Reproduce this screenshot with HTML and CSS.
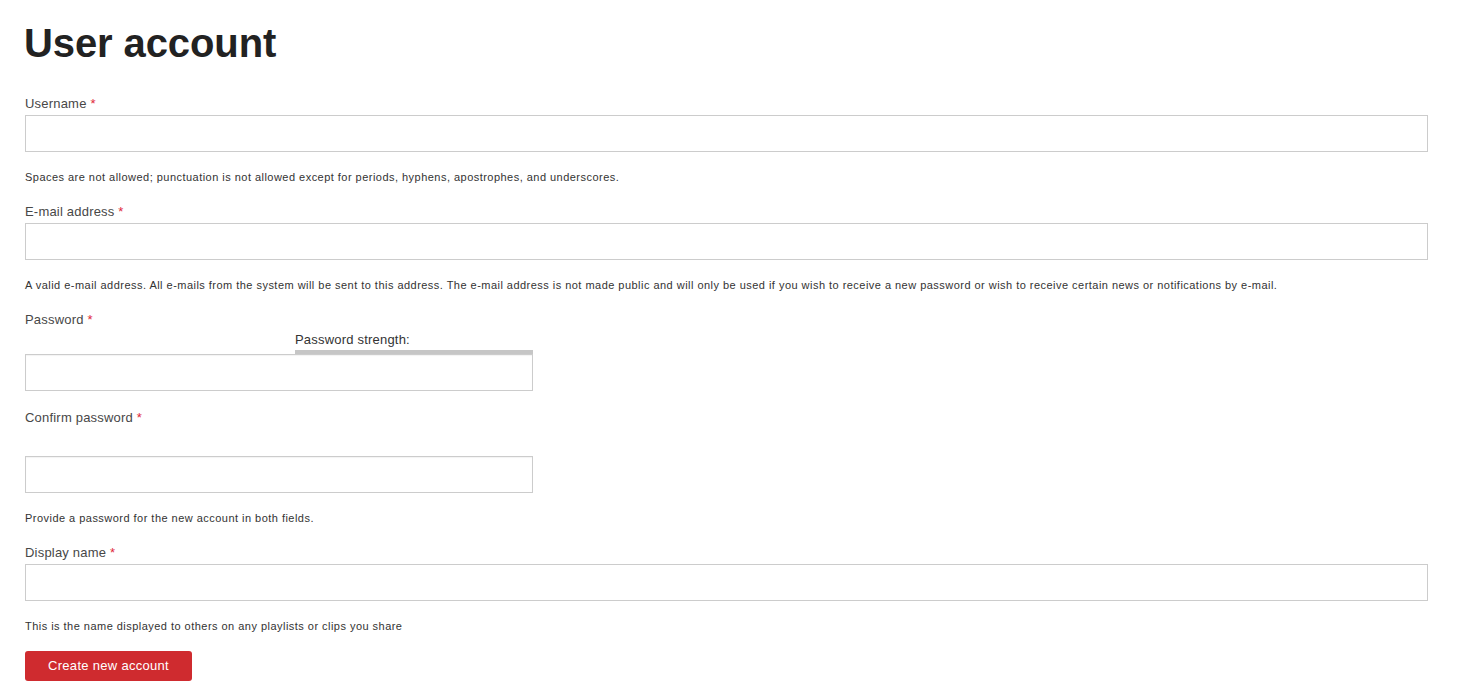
FILE: index.html
```html
<!DOCTYPE html>
<html lang="en">
<head>
<meta charset="utf-8">
<title>User account</title>
<link rel="stylesheet" href="styles.css">
</head>
<body>
<main class="page">
  <h1 class="page-title">User account</h1>
  <form class="account-form">
    <div class="field">
      <label class="field-label" for="name">Username <span class="req">*</span></label>
      <input class="text-input" id="name" type="text">
      <div class="description">Spaces are not allowed; punctuation is not allowed except for periods, hyphens, apostrophes, and underscores.</div>
    </div>
    <div class="field">
      <label class="field-label" for="mail">E-mail address <span class="req">*</span></label>
      <input class="text-input" id="mail" type="text">
      <div class="description">A valid e-mail address. All e-mails from the system will be sent to this address. The e-mail address is not made public and will only be used if you wish to receive a new password or wish to receive certain news or notifications by e-mail.</div>
    </div>
    <div class="field password-field">
      <label class="field-label" for="pass1">Password <span class="req">*</span></label>
      <div class="strength">
        <div class="strength-title">Password strength:</div>
        <div class="strength-bar"></div>
      </div>
      <input class="text-input pass-input" id="pass1" type="password">
    </div>
    <div class="field password-field">
      <label class="field-label" for="pass2">Confirm password <span class="req">*</span></label>
      <div class="confirm-message"></div>
      <input class="text-input pass-input" id="pass2" type="password">
      <div class="description">Provide a password for the new account in both fields.</div>
    </div>
    <div class="field">
      <label class="field-label" for="display">Display name <span class="req">*</span></label>
      <input class="text-input" id="display" type="text">
      <div class="description">This is the name displayed to others on any playlists or clips you share</div>
    </div>
    <div class="actions">
      <button class="submit-btn" type="button">Create new account</button>
    </div>
  </form>
</main>
</body>
</html>
```

FILE: styles.css
```css
html, body {
  margin: 0;
  padding: 0;
  background: #ffffff;
}

body {
  font-family: "Liberation Sans", Arial, sans-serif;
  color: #333333;
}

.page {
  padding: 0 44px 0 25px;
}

.page-title {
  margin: 19px 0 28px -1px;
  font-size: 40px;
  line-height: 48px;
  font-weight: 700;
  color: #222222;
  letter-spacing: -0.1px;
}

.account-form {
  display: block;
}

.field + .field {
  margin-top: 18px;
}

.field-label {
  display: block;
  font-size: 13px;
  line-height: 18px;
  color: #474747;
  letter-spacing: 0.2px;
  margin-bottom: 2px;
}

.req {
  color: #e0283a;
}

.text-input {
  display: block;
  box-sizing: border-box;
  width: 100%;
  height: 37px;
  margin: 0;
  padding: 0 8px;
  border: 1px solid #cccccc;
  border-radius: 0;
  background: #ffffff;
  font-family: inherit;
  font-size: 13px;
  outline: none;
}

.password-field .text-input {
  width: 508px;
  box-shadow: inset 0 1px 1px rgba(0, 0, 0, 0.05);
}

.description {
  margin-top: 17px;
  font-size: 11px;
  line-height: 16px;
  letter-spacing: 0.47px;
  color: #333333;
}

.strength {
  width: 238px;
  margin-left: 270px;
}

.strength-title {
  font-size: 13px;
  line-height: 18px;
  letter-spacing: 0.2px;
  color: #333333;
}

.strength-bar {
  height: 4px;
  margin-top: 1px;
  background: #c6c6c6;
}

.confirm-message {
  height: 27px;
}

.actions {
  margin-top: 17px;
}

.submit-btn {
  display: inline-block;
  height: 30px;
  padding: 0 23px;
  border: none;
  border-radius: 3px;
  background: #cf2b2f;
  color: #ffffff;
  font-family: inherit;
  font-size: 13px;
  letter-spacing: 0.3px;
  line-height: 30px;
  cursor: pointer;
}
```
